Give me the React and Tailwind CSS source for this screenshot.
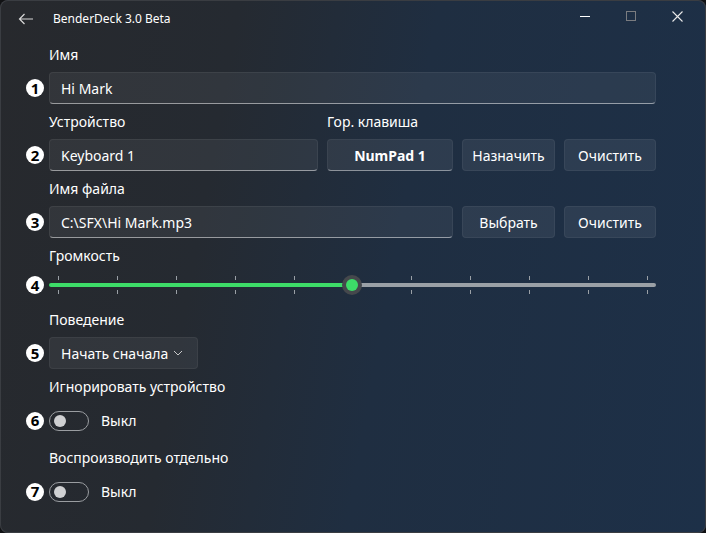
import React from "react";

const font = { fontFamily: '"Segoe UI", "Noto Sans", "Open Sans", sans-serif' };

function Badge({ n }) {
  return (
    <div className="w-[18px] h-[18px] rounded-full bg-white text-black flex items-center justify-center text-[15px] font-bold leading-none shrink-0">
      {n}
    </div>
  );
}

function Row({ n, children }) {
  return (
    <div className="flex items-center pl-[26px] gap-[5px]">
      <Badge n={n} />
      {children}
    </div>
  );
}

function Label({ children, className = "" }) {
  return <div className={"pl-[49px] h-[20px] leading-[20px] text-[14px] text-white " + className}>{children}</div>;
}

function Input({ children, className = "" }) {
  return (
    <div className={"h-[32px] rounded-[4px] bg-white/[0.06] border border-white/[0.06] border-b-white/[0.5] flex items-center pl-[11px] text-[14px] text-white " + className}>
      {children}
    </div>
  );
}

function Btn({ children, className = "" }) {
  return (
    <div className={"h-[32px] rounded-[4px] bg-white/[0.07] border border-white/[0.05] flex items-center justify-center text-[14px] text-white " + className}>
      {children}
    </div>
  );
}

function Toggle() {
  return (
    <div className="flex items-center gap-[12px]">
      <div className="w-[40px] h-[20px] rounded-full border border-[#9a9da1] flex items-center pl-[4px]">
        <div className="w-[12px] h-[12px] rounded-full bg-[#cfd0d2]" />
      </div>
      <span className="text-[14px] text-white">Выкл</span>
    </div>
  );
}

export default function App() {
  const ticks = Array.from({ length: 11 });
  return (
    <div className="w-[706px] h-[533px] bg-[#111214]" style={font}>
      <div className="w-[706px] h-[533px] rounded-[8px] shadow-[inset_0_0_0_1px_#3a3d42] overflow-hidden bg-[linear-gradient(100deg,#27292d_0%,#252a31_30%,#1f2e41_55%,#1d3048_100%)] flex flex-col">
        {/* title bar */}
        <div className="h-[45px] flex items-start">
          <div className="flex items-center h-[38px] pl-[18px]">
            <svg width="16" height="12" viewBox="0 0 16 12">
              <path d="M15 6H1.5M6.5 1L1.5 6l5 5" fill="none" stroke="#d8d8d8" strokeWidth="1.2" />
            </svg>
            <span className="ml-[19px] text-[12px] text-white">BenderDeck 3.0 Beta</span>
          </div>
          <div className="ml-auto flex h-[32px] items-center">
            <div className="w-[46px] flex justify-center">
              <div className="w-[10px] h-[1px] bg-white" />
            </div>
            <div className="w-[46px] flex justify-center">
              <div className="w-[10px] h-[10px] border border-[#7a7c80]" />
            </div>
            <div className="w-[46px] flex justify-center">
              <svg width="11" height="11" viewBox="0 0 11 11">
                <path d="M0.5 0.5L10.5 10.5M10.5 0.5L0.5 10.5" stroke="#e8e8e8" strokeWidth="1.1" />
              </svg>
            </div>
            <div className="w-[6px]" />
          </div>
        </div>

        <Label>Имя</Label>
        <div className="mt-[7px]">
          <Row n="1">
            <Input className="w-[607px]">Hi Mark</Input>
          </Row>
        </div>

        <div className="mt-[8px] flex h-[20px] leading-[20px] text-[14px] text-white">
          <div className="pl-[49px] w-[327px]">Устройство</div>
          <div>Гор. клавиша</div>
        </div>
        <div className="mt-[7px]">
          <Row n="2">
            <Input className="w-[269px]">Keyboard 1</Input>
            <Btn className="ml-[4px] w-[126px] font-bold border-b-white/[0.45]">NumPad 1</Btn>
            <Btn className="ml-[4px] w-[93px]">Назначить</Btn>
            <Btn className="ml-[4px] w-[92px]">Очистить</Btn>
          </Row>
        </div>

        <Label className="mt-[8px]">Имя файла</Label>
        <div className="mt-[7px]">
          <Row n="3">
            <Input className="w-[404px]">C:\SFX\Hi Mark.mp3</Input>
            <Btn className="ml-[4px] w-[93px]">Выбрать</Btn>
            <Btn className="ml-[4px] w-[92px]">Очистить</Btn>
          </Row>
        </div>

        <Label className="mt-[8px]">Громкость</Label>
        <div className="mt-[6px]">
          <Row n="4">
            <div className="w-[607px] h-[26px] flex flex-col justify-center">
              <div className="flex justify-between pl-[9px] pr-[8px] h-[4px]">
                {ticks.map((_, i) => (
                  <div key={i} className="w-[1px] h-[4px] bg-[#9aa0a6]" />
                ))}
              </div>
              <div className="h-[10px] flex items-center">
                <div className="w-[303px] h-[4px] rounded-l-full bg-[#3ddc68]" />
                <div className="relative w-0 h-[4px] flex items-center justify-center">
                  <div className="absolute w-[20px] h-[20px] rounded-full bg-[#45484c] flex items-center justify-center">
                    <div className="w-[12px] h-[12px] rounded-full bg-[#3ddc68]" />
                  </div>
                </div>
                <div className="flex-1 h-[4px] rounded-r-full bg-[#9aa0a6]" />
              </div>
              <div className="flex justify-between pl-[9px] pr-[8px] h-[4px]">
                {ticks.map((_, i) => (
                  <div key={i} className="w-[1px] h-[4px] bg-[#9aa0a6]" />
                ))}
              </div>
            </div>
          </Row>
        </div>

        <Label className="mt-[12px]">Поведение</Label>
        <div className="mt-[7px]">
          <Row n="5">
            <div className="w-[149px] h-[32px] rounded-[4px] bg-white/[0.06] border border-white/[0.05] flex items-center justify-between pl-[11px] pr-[14px] text-[14px] text-white">
              <span>Начать сначала</span>
              <svg width="10" height="6" viewBox="0 0 10 6">
                <path d="M1 1l4 4 4-4" fill="none" stroke="#c8c8c8" strokeWidth="1" />
              </svg>
            </div>
          </Row>
        </div>

        <Label className="mt-[8px]">Игнорировать устройство</Label>
        <div className="mt-[13px]">
          <Row n="6">
            <Toggle />
          </Row>
        </div>

        <Label className="mt-[17px]">Воспроизводить отдельно</Label>
        <div className="mt-[13px]">
          <Row n="7">
            <Toggle />
          </Row>
        </div>
      </div>
    </div>
  );
}
